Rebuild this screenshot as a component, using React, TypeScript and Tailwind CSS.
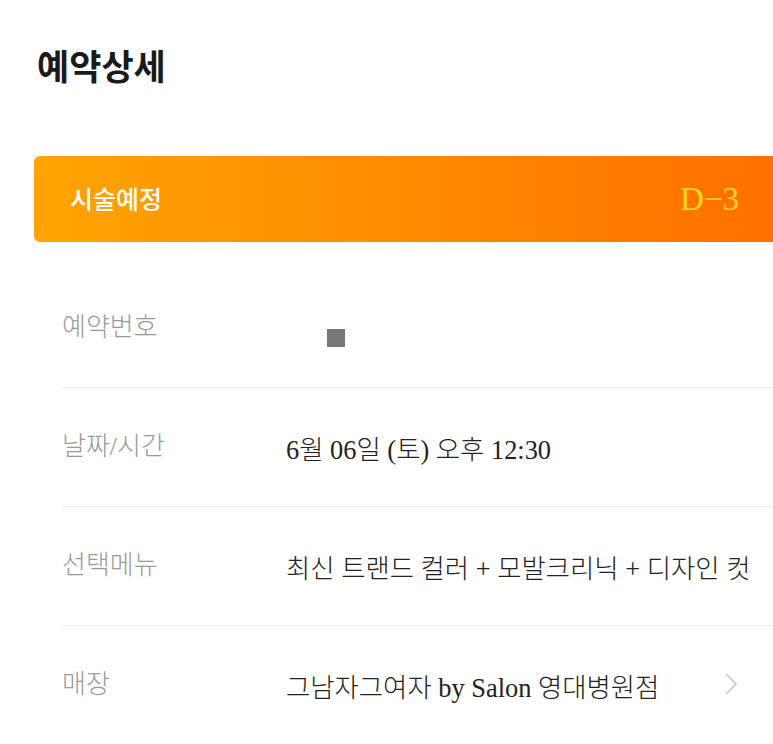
import React from "react";

const ko = { fontFamily: '"Liberation Serif", "Noto Sans CJK KR", serif' };
const koSans = { fontFamily: '"Noto Sans CJK KR", "Noto Sans", sans-serif' };

function Row({ label, children, chevron }: { label: string; children?: React.ReactNode; chevron?: boolean }) {
  return (
    <div className="flex h-[119px] items-center border-b border-[#eeeeee]">
      <div className="w-[224px] shrink-0 text-[26px] font-light text-[#9a9a9a] leading-none -mt-[1px]" style={ko}>
        {label}
      </div>
      <div className="flex-1 text-[26.4px] font-light text-[#222222] leading-none mt-[7px]" style={ko}>
        {children}
      </div>
      {chevron && (
        <svg width="16" height="26" viewBox="0 0 16 26" className="mr-[34px] -mt-[2px]">
          <path d="M3 3 L13 13 L3 23" fill="none" stroke="#c4c4c4" strokeWidth="1.6" />
        </svg>
      )}
    </div>
  );
}

export default function App() {
  return (
    <div className="w-[773px] h-[744px] overflow-hidden bg-white">
      <div className="pt-[43px] pl-[37px]">
        <h1 className="text-[35px] font-bold text-[#1a1a1a] leading-[44px]" style={koSans}>
          예약상세
        </h1>
      </div>
      <div className="mt-[69px] ml-[34px] mr-0 h-[86px] rounded-l-[6px] bg-gradient-to-r from-[#ffa402] to-[#ff7000] flex items-center justify-between pl-[36px] pr-[34px]">
        <span className="text-[25px] font-medium text-white" style={koSans}>
          시술예정
        </span>
        <span className="text-[33px] text-[#ffd81a] leading-none" style={{ fontFamily: '"Liberation Serif", serif' }}>
          D−3
        </span>
      </div>
      <div className="ml-[62px] mt-[27px]">
        <Row label="예약번호">
          <div className="ml-[41px] mt-[12px] w-[18px] h-[18px] bg-[#777777]" />
        </Row>
        <Row label="날짜/시간">6월 06일 (토) 오후 12:30</Row>
        <Row label="선택메뉴">최신 트랜드 컬러 + 모발크리닉 + 디자인 컷</Row>
        <Row label="매장" chevron>
          그남자그여자 by Salon 영대병원점
        </Row>
      </div>
    </div>
  );
}
